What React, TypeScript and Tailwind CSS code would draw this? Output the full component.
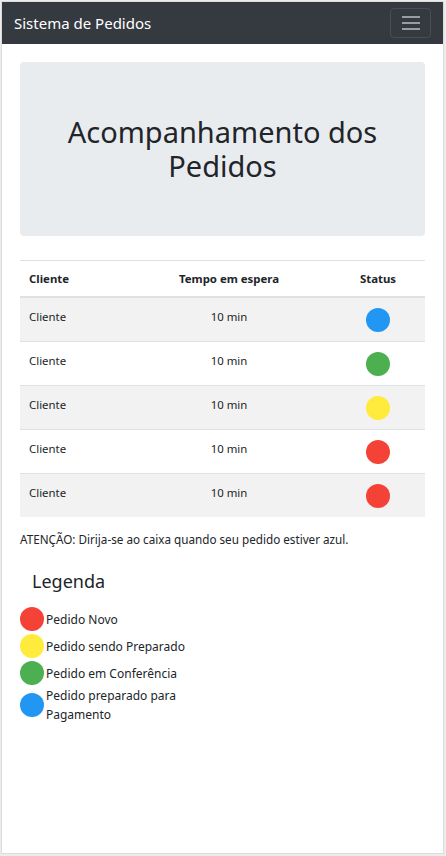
const rows = [
  { name: 'Cliente', wait: '10 min', color: 'bg-[#2196f3]' },
  { name: 'Cliente', wait: '10 min', color: 'bg-[#4caf50]' },
  { name: 'Cliente', wait: '10 min', color: 'bg-[#ffeb3b]' },
  { name: 'Cliente', wait: '10 min', color: 'bg-[#f44336]' },
  { name: 'Cliente', wait: '10 min', color: 'bg-[#f44336]' },
];

const legend = [
  { label: 'Pedido Novo', color: 'bg-[#f44336]' },
  { label: 'Pedido sendo Preparado', color: 'bg-[#ffeb3b]' },
  { label: 'Pedido em Conferência', color: 'bg-[#4caf50]' },
  { label: 'Pedido preparado para Pagamento', color: 'bg-[#2196f3]' },
];

export default function App() {
  return (
    <div className="h-[856px] w-[446px] bg-[#ececec] pl-px pt-px font-['Noto_Sans',sans-serif] text-[#212529]">
      <div className="h-[853px] w-[443px] border border-[#dcdcdc] bg-white">
        <nav className="flex h-[42px] items-center justify-between bg-[#343a40] pl-[12px] pr-[12px]">
          <span className="text-[15px] text-white">Sistema de Pedidos</span>
          <button className="flex h-[30px] w-[41px] flex-col items-center justify-center gap-[4px] rounded-[4px] border border-white/10">
            <span className="h-[2px] w-[18px] bg-[#9a9da0]" />
            <span className="h-[2px] w-[18px] bg-[#9a9da0]" />
            <span className="h-[2px] w-[18px] bg-[#9a9da0]" />
          </button>
        </nav>

        <main className="px-[18px] pt-[18px]">
          <div className="flex h-[174px] items-center justify-center rounded-[4px] bg-[#e9ecef] px-8 text-center">
            <h1 className="text-[29px] leading-[34px]">Acompanhamento dos Pedidos</h1>
          </div>

          <table className="mt-[24px] w-full border-collapse text-[11.4px] leading-[18px]">
            <thead>
              <tr className="border-t border-b-2 border-[#dee2e6]">
                <th className="w-[107px] pt-[9px] pb-[8px] pl-[9px] text-left align-top font-bold">Cliente</th>
                <th className="w-[204px] pt-[9px] pb-[8px] text-center align-top font-bold">Tempo em espera</th>
                <th className="pt-[9px] pb-[8px] text-center align-top font-bold">Status</th>
              </tr>
            </thead>
            <tbody>
              {rows.map((row, i) => (
                <tr
                  key={i}
                  className={`border-t border-[#dee2e6] ${i % 2 === 0 ? 'bg-[#f2f2f2]' : 'bg-white'}`}
                >
                  <td className="pt-[10px] pb-[9px] pl-[9px] align-top">{row.name}</td>
                  <td className="pt-[10px] pb-[9px] text-center align-top">{row.wait}</td>
                  <td className="pt-[10px] pb-[9px] align-top">
                    <div className={`mx-auto h-[24px] w-[24px] rounded-full ${row.color}`} />
                  </td>
                </tr>
              ))}
            </tbody>
          </table>

          <p className="mt-[13px] text-[11.7px] leading-[18px]">
            ATENÇÃO: Dirija-se ao caixa quando seu pedido estiver azul.
          </p>

          <h4 className="mt-[21px] pl-[12px] text-[18px] leading-[24px]">Legenda</h4>

          <ul className="mt-[14px] flex flex-col gap-[3px]">
            {legend.map((item, i) => (
              <li key={item.label} className={`flex items-center ${i === legend.length - 1 ? '-mt-[2px]' : ''}`}>
                <span className={`h-[24px] w-[24px] shrink-0 rounded-full ${item.color}`} />
                <span className="w-[152px] pl-[2px] text-[12px] leading-[19px]">{item.label}</span>
              </li>
            ))}
          </ul>
        </main>
      </div>
    </div>
  );
}
